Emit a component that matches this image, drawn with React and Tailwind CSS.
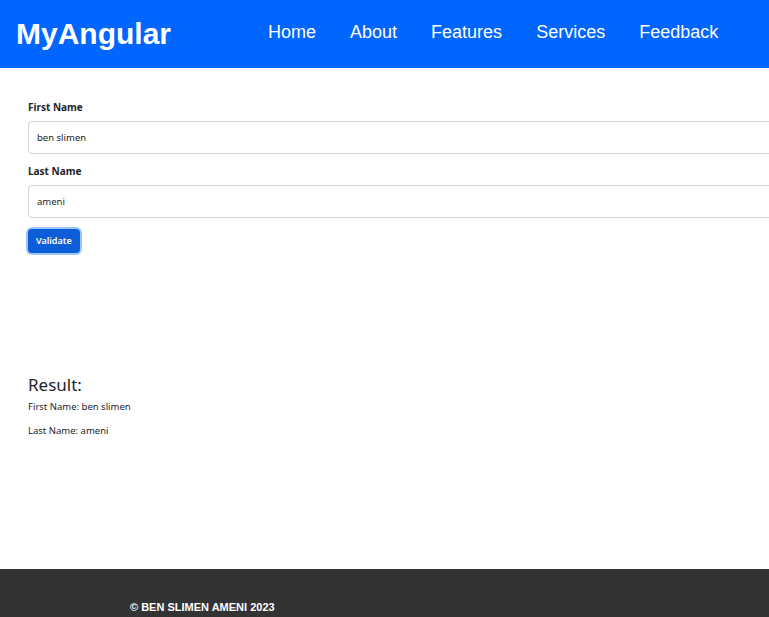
import React from "react";

const Field = ({ label, value }) => (
  <div className="flex flex-col">
    <label className="text-[10px] font-bold text-[#212529] leading-[14px] mb-[7px]">{label}</label>
    <input
      readOnly
      value={value}
      className="w-[800px] h-[33px] border border-[#ced4da] rounded-[4px] px-[8px] text-[9.5px] text-[#212529] bg-white outline-none"
    />
  </div>
);

export default function App() {
  return (
    <div className="w-[769px] h-[617px] overflow-hidden bg-white flex flex-col" style={{ fontFamily: '"Noto Sans", "Open Sans", sans-serif' }}>
      <header className="h-[68px] shrink-0 bg-[#0066ff] flex items-center px-[16px]" style={{ fontFamily: '"Liberation Sans", Arial, sans-serif' }}>
        <div className="text-[30px] font-bold text-white leading-none">MyAngular</div>
        <nav className="ml-[97px] flex gap-[34px] text-[18px] text-white -mt-[4px]">
          <span>Home</span>
          <span>About</span>
          <span>Features</span>
          <span>Services</span>
          <span>Feedback</span>
        </nav>
      </header>

      <main className="flex-1 px-[28px] pt-[32px]">
        <div className="flex flex-col gap-[10px]">
          <Field label="First Name" value="ben slimen" />
          <Field label="Last Name" value="ameni" />
        </div>
        <button className="mt-[11px] h-[24px] px-[8px] bg-[#0b5ed7] text-white text-[9px] font-semibold rounded-[4px] ring-[2px] ring-[#9ec5fe]">
          Validate
        </button>

        <div className="mt-[122px]">
          <h2 className="text-[17px] leading-[20px] text-[#212529]">Result:</h2>
          <p className="text-[9.5px] leading-[14px] mt-[5px] text-[#212529]">First Name: ben slimen</p>
          <p className="text-[9.5px] leading-[14px] mt-[10px] text-[#212529]">Last Name: ameni</p>
        </div>
      </main>

      <footer className="h-[48px] shrink-0 bg-[#333333] pl-[130px] pt-[32px]" style={{ fontFamily: '"Liberation Sans", Arial, sans-serif' }}>
        <div className="text-[11px] leading-[13px] font-bold text-white">© BEN SLIMEN AMENI 2023</div>
      </footer>
    </div>
  );
}
